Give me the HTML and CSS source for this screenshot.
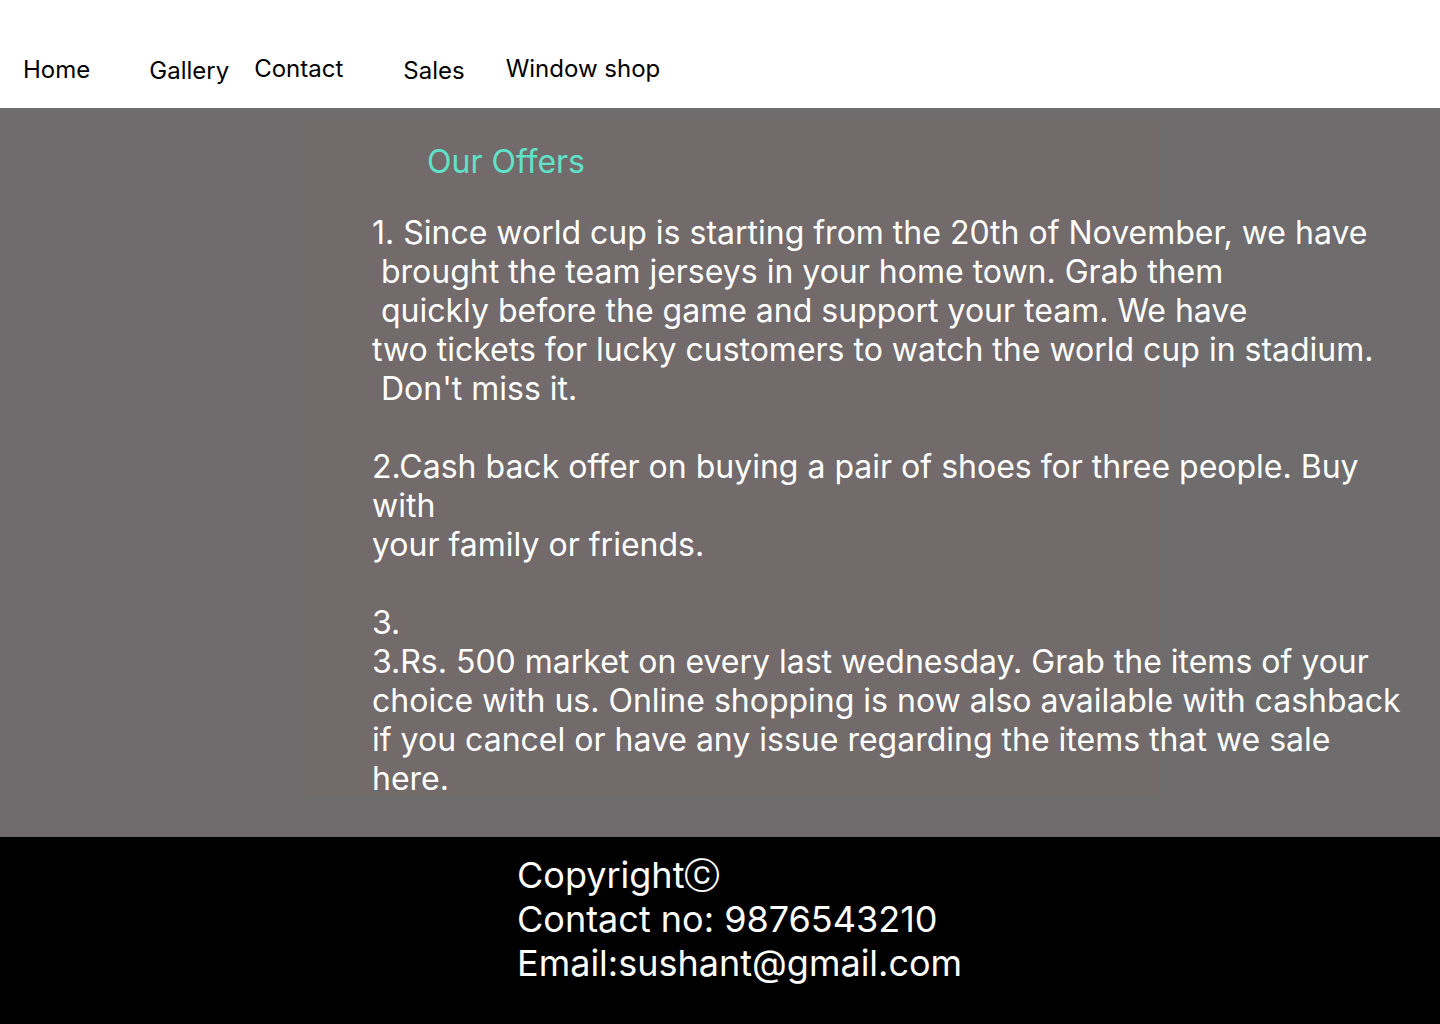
FILE: index.html
```html
<!DOCTYPE html>
<html lang="en">
<head>
<meta charset="utf-8">
<title>Our Offers</title>
<link rel="stylesheet" href="styles.css">
</head>
<body>
<header class="site-header">
  <nav class="nav">
    <a class="nav-link nav-home" href="#">Home</a>
    <a class="nav-link nav-gallery" href="#">Gallery</a>
    <a class="nav-link nav-contact" href="#">Contact</a>
    <a class="nav-link nav-sales" href="#">Sales</a>
    <a class="nav-link nav-window" href="#">Window shop</a>
  </nav>
</header>
<main class="offers-section">
  <div class="offers-box">
    <h2 class="offers-title">Our Offers</h2>
    <div class="offers-text">
      <p class="offer">1. Since world cup is starting from the 20th of November, we have<br>&nbsp;brought the team jerseys in your home town. Grab them<br>&nbsp;quickly before the game and support your team. We have<br>two tickets for lucky customers to watch the world cup in stadium.<br>&nbsp;Don't miss it.</p>
      <p class="offer">2.Cash back offer on buying a pair of shoes for three people. Buy with<br>your family or friends.</p>
      <p class="offer">3.<br>3.Rs. 500 market on every last wednesday. Grab the items of your choice with us. Online shopping is now also available with cashback if you cancel or have any issue regarding the items that we sale here.</p>
    </div>
  </div>
</main>
<footer class="site-footer">
  <div class="footer-info">
    <div>Copyrightⓒ</div>
    <div>Contact no: 9876543210</div>
    <div>Email:sushant@gmail.com</div>
  </div>
</footer>
</body>
</html>
```
FILE: styles.css
```css
* { box-sizing: border-box; }
html, body { margin: 0; padding: 0; }
body {
  font-family: Inter, "Noto Sans", sans-serif;
  background: #000;
}
.site-header {
  background: #fff;
  height: 108px;
}
.nav {
  display: flex;
  align-items: flex-start;
  padding-left: 23px;
}
.nav-link {
  color: #000;
  text-decoration: none;
  font-size: 24px;
  line-height: 29px;
}
.nav-home { margin-top: 55px; }
.nav-gallery { margin-top: 56px; margin-left: 59px; }
.nav-contact { margin-top: 54px; margin-left: 25px; }
.nav-sales { margin-top: 56px; margin-left: 60px; }
.nav-window { margin-top: 54px; margin-left: 41px; }

.offers-section {
  background: #6e6c6d;
  padding: 14px 0 41px 302px;
}
.offers-box {
  background: #726a6b;
  width: 858px;
  height: 674px;
  padding-top: 20px;
  padding-left: 70px;
}
.offers-title {
  margin: 0 0 0 55px;
  color: #5ee3c9;
  font-weight: 400;
  font-size: 32px;
  line-height: 39px;
}
.offers-text {
  width: 1036px;
  margin-top: 32px;
  color: #fff;
  font-size: 32px;
  line-height: 39px;
}
.offer { margin: 0 0 39px; }
.offer:last-child { margin-bottom: 0; }

.site-footer {
  background: #000;
  color: #fff;
  padding: 16px 0 40px 517px;
  font-size: 36px;
  line-height: 44px;
}
```
